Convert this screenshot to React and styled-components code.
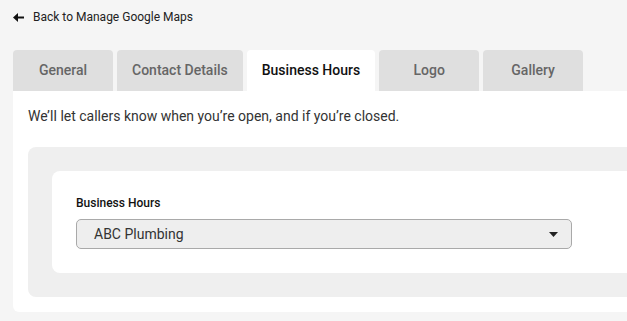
import React from "react";
import styled, { createGlobalStyle } from "styled-components";

const Global = createGlobalStyle`
  html, body { margin: 0; padding: 0; background: #f5f5f5; overflow: hidden; }
  body { font-family: Roboto, "Liberation Sans", Arial, sans-serif; }
  * { box-sizing: border-box; }
`;

const Page = styled.div`
  width: 1000px;
  padding: 9px 0 0 13px;
`;

const BackLink = styled.a`
  display: flex;
  align-items: center;
  gap: 9px;
  height: 16px;
  font-size: 12px;
  color: #222;
  text-decoration: none;
  margin-bottom: 25px;
  cursor: pointer;
`;

const Tabs = styled.div`
  display: flex;
  gap: 4px;
  height: 41px;
`;

const Tab = styled.div`
  min-width: 100px;
  padding: 0 15px 1px;
  display: flex;
  align-items: center;
  justify-content: center;
  border-radius: 4px 4px 0 0;
  font-size: 14px;
  font-weight: 500;
  background: ${(p) => (p.$active ? "#ffffff" : "#dfdfdf")};
  color: ${(p) => (p.$active ? "#111111" : "#666666")};
`;

const Panel = styled.div`
  background: #ffffff;
  border-radius: 0 0 6px 6px;
  padding: 15px 15px 15px;
`;

const Intro = styled.p`
  margin: 0 0 21px;
  font-size: 14px;
  line-height: 20px;
  color: #333;
`;

const GrayBox = styled.div`
  background: #efefef;
  border-radius: 8px;
  padding: 24px;
`;

const Card = styled.div`
  background: #ffffff;
  border-radius: 8px;
  padding: 24px;
`;

const Label = styled.div`
  font-size: 12px;
  line-height: 16px;
  font-weight: 500;
  color: #111;
  margin-bottom: 8px;
`;

const Select = styled.div`
  width: 496px;
  height: 30px;
  display: flex;
  align-items: center;
  justify-content: space-between;
  padding: 0 13px 0 17px;
  background: #eeeeee;
  border: 1px solid #a9a9a9;
  border-radius: 5px;
  font-size: 14px;
  color: #333;
`;

const ArrowLeft = () => (
  <svg width="11" height="9" viewBox="0 0 11 9" aria-hidden="true">
    <path d="M11 4.5H3" stroke="#111" strokeWidth="2" />
    <path d="M0 4.5L5 0V9Z" fill="#111" />
  </svg>
);

const Caret = () => (
  <svg width="9" height="5" viewBox="0 0 9 5" aria-hidden="true">
    <path d="M0 0H9L4.5 5Z" fill="#222" />
  </svg>
);

const tabs = ["General", "Contact Details", "Business Hours", "Logo", "Gallery"];

export default function App() {
  return (
    <>
      <Global />
      <Page>
        <BackLink>
          <ArrowLeft />
          Back to Manage Google Maps
        </BackLink>
        <Tabs>
          {tabs.map((t) => (
            <Tab key={t} $active={t === "Business Hours"}>
              {t}
            </Tab>
          ))}
        </Tabs>
        <Panel>
          <Intro>We’ll let callers know when you’re open, and if you’re closed.</Intro>
          <GrayBox>
            <Card>
              <Label>Business Hours</Label>
              <Select>
                <span>ABC Plumbing</span>
                <Caret />
              </Select>
            </Card>
          </GrayBox>
        </Panel>
      </Page>
    </>
  );
}
